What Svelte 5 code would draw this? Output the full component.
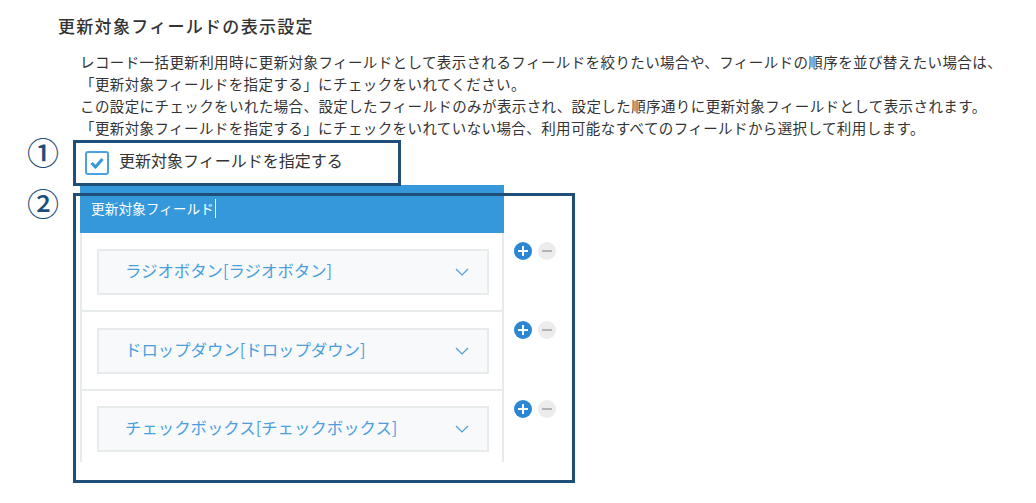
<script>
	const fields = [
		'ラジオボタン[ラジオボタン]',
		'ドロップダウン[ドロップダウン]',
		'チェックボックス[チェックボックス]'
	];
</script>

<div class="page">
	<h2 class="title">更新対象フィールドの表示設定</h2>
	<p class="desc">
		レコード一括更新利用時に更新対象フィールドとして表示されるフィールドを絞りたい場合や、フィールドの順序を並び替えたい場合は、<br>
		「更新対象フィールドを指定する」にチェックをいれてください。<br>
		この設定にチェックをいれた場合、設定したフィールドのみが表示され、設定した順序通りに更新対象フィールドとして表示されます。<br>
		「更新対象フィールドを指定する」にチェックをいれていない場合、利用可能なすべてのフィールドから選択して利用します。
	</p>

	<label class="check">
		<span class="box">
			<svg width="14" height="12" viewBox="0 0 14 12">
				<path d="M1.5 6 5.5 10 12.5 2" fill="none" stroke="#3498db" stroke-width="3"/>
			</svg>
		</span>
		<span class="check-text">更新対象フィールドを指定する</span>
	</label>

	<div class="editor">
		<div class="table">
			<div class="head"><span>更新対象フィールド</span><i class="caret"></i></div>
			{#each fields as field}
				<div class="row">
					<div class="cell">
						<div class="select">
							<span class="value">{field}</span>
							<svg width="14" height="8" viewBox="0 0 14 8">
								<path d="M1 1 7 7 13 1" fill="none" stroke="#4a9fdc" stroke-width="1.2"/>
							</svg>
						</div>
					</div>
					<div class="actions">
						<span class="btn add">
							<svg width="10" height="10" viewBox="0 0 10 10"><path d="M5 0V10M0 5H10" stroke="#fff" stroke-width="2"/></svg>
						</span>
						<span class="btn remove">
							<svg width="10" height="10" viewBox="0 0 10 10"><path d="M0 5H10" stroke="#b4b4b4" stroke-width="2"/></svg>
						</span>
					</div>
				</div>
			{/each}
		</div>
	</div>

	<div class="mark mark1"></div>
	<div class="mark mark2"></div>
	<span class="num num1">①</span>
	<span class="num num2">②</span>
</div>

<style>
	:global(body) {
		margin: 0;
		background: #fff;
	}
	.page {
		position: relative;
		width: 1036px;
		height: 503px;
		overflow: hidden;
		box-sizing: border-box;
		padding: 16px 0 0 58px;
		font-family: "Noto Sans CJK JP", "Noto Sans", sans-serif;
		color: #333;
	}
	.title {
		margin: 0;
		font-size: 17px;
		line-height: 20px;
		font-weight: 500;
		letter-spacing: 1.3px;
	}
	.desc {
		margin: 15px 0 0 22px;
		font-size: 14.5px;
		line-height: 22px;
		letter-spacing: 0.4px;
		white-space: nowrap;
	}
	.check {
		display: flex;
		align-items: center;
		gap: 10px;
		margin: 1px 0 0 27px;
		height: 46px;
		font-size: 16px;
	}
	.check-text {
		margin-bottom: 6px;
	}
	.box {
		display: flex;
		align-items: center;
		justify-content: center;
		width: 20px;
		height: 20px;
		border: 2px solid #4aa3e0;
		border-radius: 3px;
	}
	.editor {
		margin: -1px 0 0 22px;
		width: 424px;
	}
	.head {
		display: flex;
		align-items: center;
		height: 48px;
		padding: 0 0 2px 11px;
		background: #3498db;
		color: #fff;
		font-size: 13.7px;
		box-sizing: border-box;
	}
	.caret {
		width: 1px;
		height: 19px;
		background: #fff;
		margin-left: 1px;
	}
	.row {
		position: relative;
		display: flex;
	}
	.cell {
		box-sizing: border-box;
		width: 424px;
		padding: 16px 13px 15px 15px;
		border: solid #e8ebec;
		border-width: 0 2px 2px 2px;
	}
	.row:last-child .cell {
		border-bottom: 0;
		padding-top: 15px;
		padding-bottom: 10px;
	}
	.select {
		display: flex;
		align-items: center;
		justify-content: space-between;
		box-sizing: border-box;
		height: 46px;
		padding: 0 18px 0 26px;
		background: #f7f9fa;
		border: 2px solid #e8ebec;
		color: #4a9fdc;
		font-size: 16.4px;
	}
	.value {
		margin-bottom: 4px;
	}
	.actions {
		display: flex;
		gap: 6px;
		position: absolute;
		left: 434px;
		top: 9px;
	}
	.btn {
		display: flex;
		align-items: center;
		justify-content: center;
		width: 18px;
		height: 18px;
		border-radius: 50%;
	}
	.add {
		background: #2b87d3;
	}
	.remove {
		background: #ececec;
	}
	.mark {
		position: absolute;
		box-sizing: border-box;
		border: 3px solid #1f4e79;
	}
	.mark1 {
		left: 73px;
		top: 140px;
		width: 328px;
		height: 46px;
	}
	.mark2 {
		left: 73px;
		top: 193px;
		width: 502px;
		height: 290px;
	}
	.num {
		position: absolute;
		left: 27px;
		font-size: 32px;
		line-height: 36px;
		font-weight: 500;
		color: #1f4e79;
	}
	.num1 {
		top: 133px;
	}
	.num2 {
		top: 184px;
	}
</style>
